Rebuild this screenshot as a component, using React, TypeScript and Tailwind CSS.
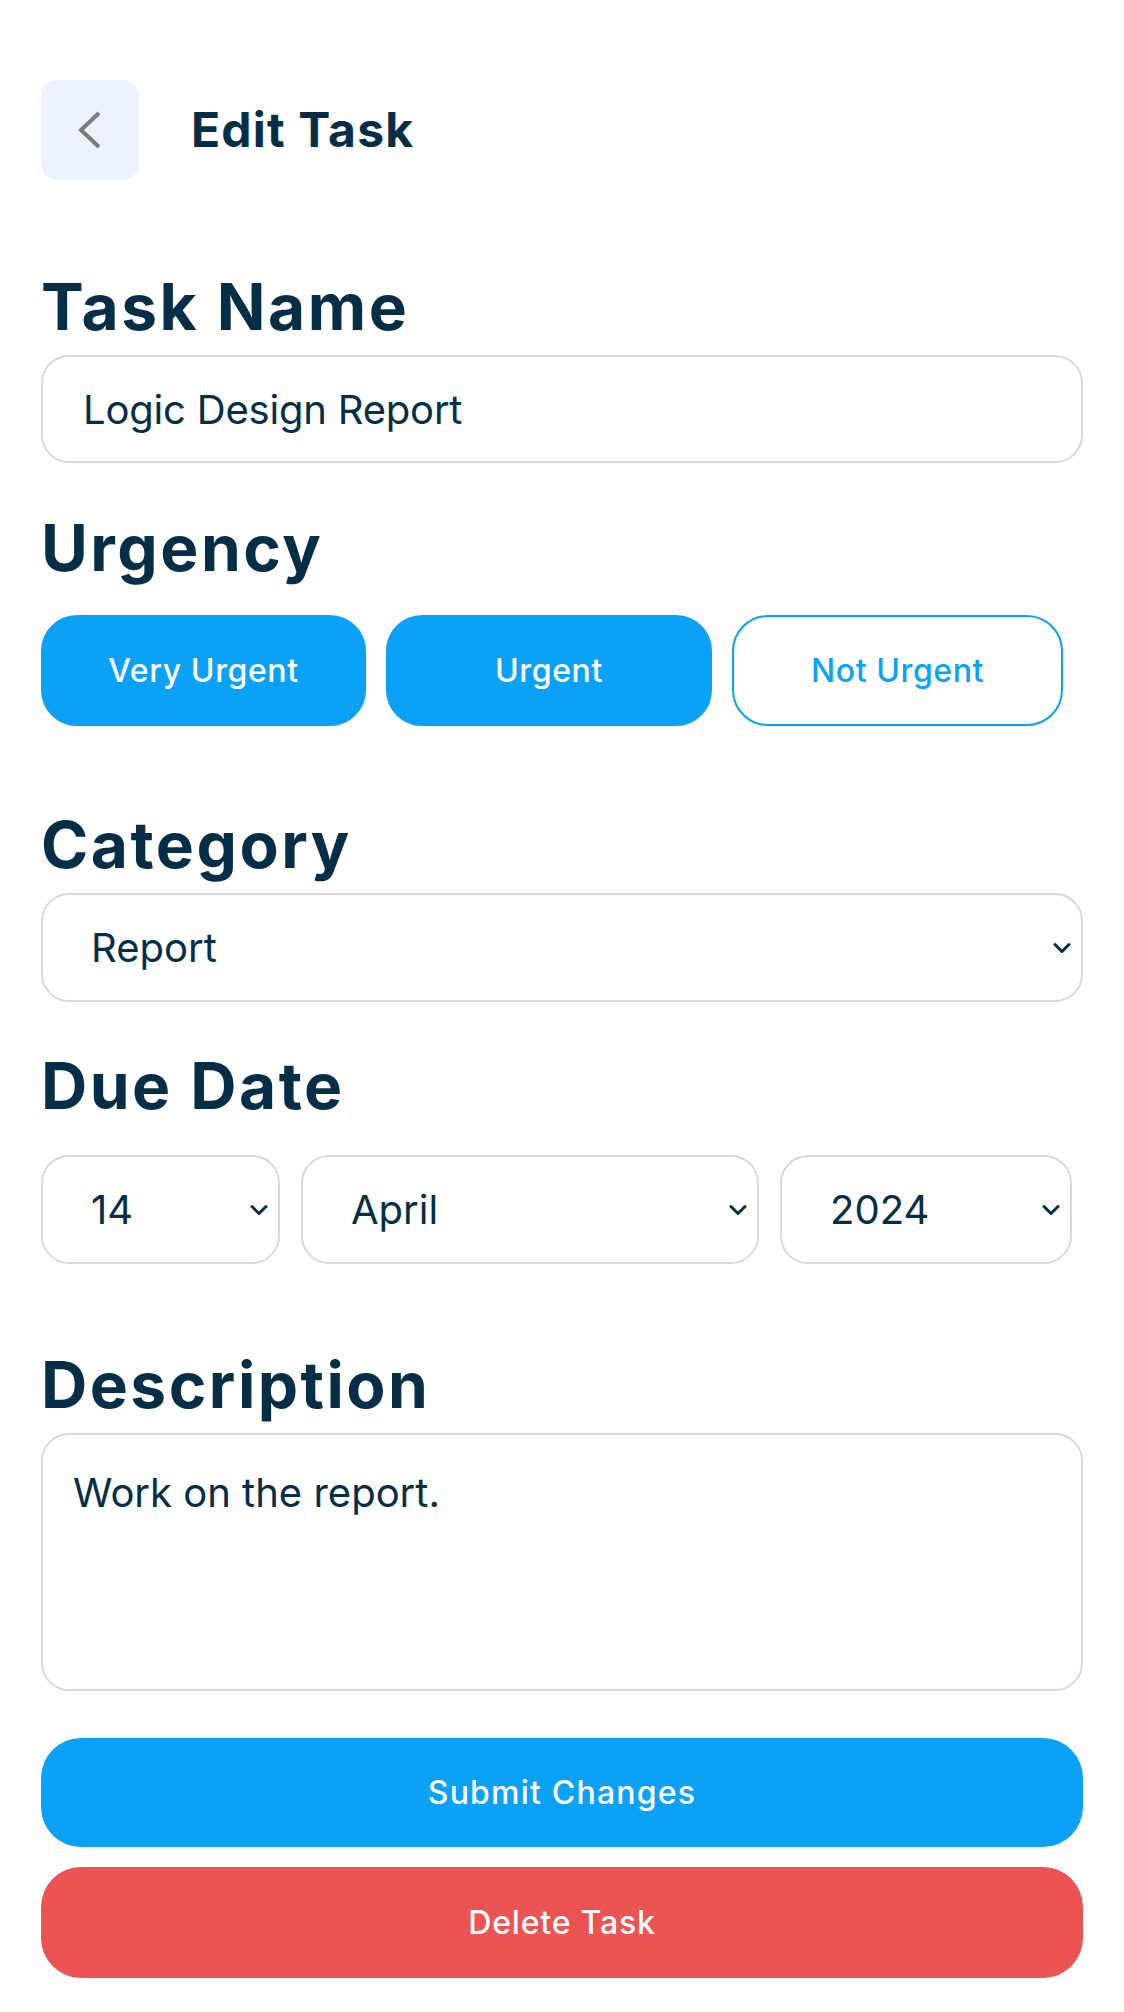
import { useState } from 'react';

const URGENCY = [
  { label: 'Very Urgent', width: 'w-[325px]' },
  { label: 'Urgent', width: 'w-[326px]' },
  { label: 'Not Urgent', width: 'w-[331px]' },
];

function Chevron() {
  return (
    <svg
      className="pointer-events-none absolute right-[12px] top-1/2 -translate-y-1/2"
      width="18"
      height="11"
      viewBox="0 0 18 11"
      fill="none"
    >
      <path d="M2 2l7 7 7-7" stroke="#062e47" strokeWidth="3" strokeLinecap="round" strokeLinejoin="round" />
    </svg>
  );
}

function Select({ value, options, className }: { value: string; options: string[]; className: string }) {
  return (
    <div className={`relative ${className}`}>
      <select
        defaultValue={value}
        className="h-[109px] w-full appearance-none rounded-[28px] border-2 border-[#d9d9d9] bg-white pl-[48px] text-[40px] text-[#062e47] outline-none"
      >
        {options.map((o) => (
          <option key={o}>{o}</option>
        ))}
      </select>
      <Chevron />
    </div>
  );
}

function Heading({ children, className = '' }: { children: string; className?: string }) {
  return (
    <h2 className={`h-[96px] text-[64px] leading-[96px] font-bold tracking-[2.5px] text-[#062e47] ${className}`}>
      {children}
    </h2>
  );
}

export default function App() {
  const [urgency, setUrgency] = useState(['Very Urgent', 'Urgent']);

  const toggle = (label: string) =>
    setUrgency((u) => (u.includes(label) ? u.filter((x) => x !== label) : [...u, label]));

  return (
    <div className="min-h-[2012px] bg-white px-[41px] pt-[80px] font-['Inter','Liberation_Sans',sans-serif]">
      {/* header */}
      <div className="flex h-[100px] items-center gap-[52px]">
        <button className="flex h-[100px] w-[98px] items-center justify-center rounded-[16px] bg-[#edf3fe]">
          <svg width="30" height="40" viewBox="0 0 30 40" fill="none">
            <path d="M24 3L6 20l18 17" stroke="#7b7b7b" strokeWidth="4" />
          </svg>
        </button>
        <h1 className="text-[48px] font-bold tracking-[1.2px] text-[#062e47]">Edit Task</h1>
      </div>

      <Heading className="mt-[79px]">Task Name</Heading>
      <input
        defaultValue="Logic Design Report"
        className="h-[108px] w-full rounded-[28px] border-2 border-[#d9d9d9] px-[40px] text-[40px] tracking-[-0.2px] text-[#062e47] outline-none"
      />

      <Heading className="mt-[37px]">Urgency</Heading>
      <div className="mt-[19px] flex gap-[20px]">
        {URGENCY.map(({ label, width }) => {
          const on = urgency.includes(label);
          return (
            <button
              key={label}
              onClick={() => toggle(label)}
              className={`h-[111px] ${width} rounded-[36px] border-2 text-[32px] font-medium tracking-[0.6px] ${
                on ? 'border-[#0ba2f6] bg-[#0ba2f6] text-white' : 'border-[#0ba2f6] bg-white text-[#0ba2f6]'
              }`}
            >
              {label}
            </button>
          );
        })}
      </div>

      <Heading className="mt-[71px]">Category</Heading>
      <Select value="Report" options={['Report', 'Homework', 'Project', 'Exam']} className="w-full" />

      <Heading className="mt-[36px]">Due Date</Heading>
      <div className="mt-[21px] flex gap-[21px]">
        <Select value="14" options={Array.from({ length: 31 }, (_, i) => String(i + 1))} className="w-[239px]" />
        <Select
          value="April"
          options={['January', 'February', 'March', 'April', 'May', 'June', 'July', 'August', 'September', 'October', 'November', 'December']}
          className="w-[458px]"
        />
        <Select value="2024" options={['2023', '2024', '2025']} className="w-[292px]" />
      </div>

      <Heading className="mt-[73px]">Description</Heading>
      <textarea
        defaultValue="Work on the report."
        className="block h-[258px] w-full resize-none rounded-[28px] border-2 border-[#d9d9d9] px-[30px] pt-[28px] text-[40px] leading-[60px] text-[#062e47] outline-none"
      />

      <button className="mt-[47px] h-[109px] w-full rounded-[40px] bg-[#0ba2f6] text-[32px] font-medium tracking-[1.2px] text-white">
        Submit Changes
      </button>
      <button className="mt-[20px] h-[111px] w-full rounded-[40px] bg-[#ec5353] text-[32px] font-medium tracking-[0.8px] text-white">
        Delete Task
      </button>
    </div>
  );
}
